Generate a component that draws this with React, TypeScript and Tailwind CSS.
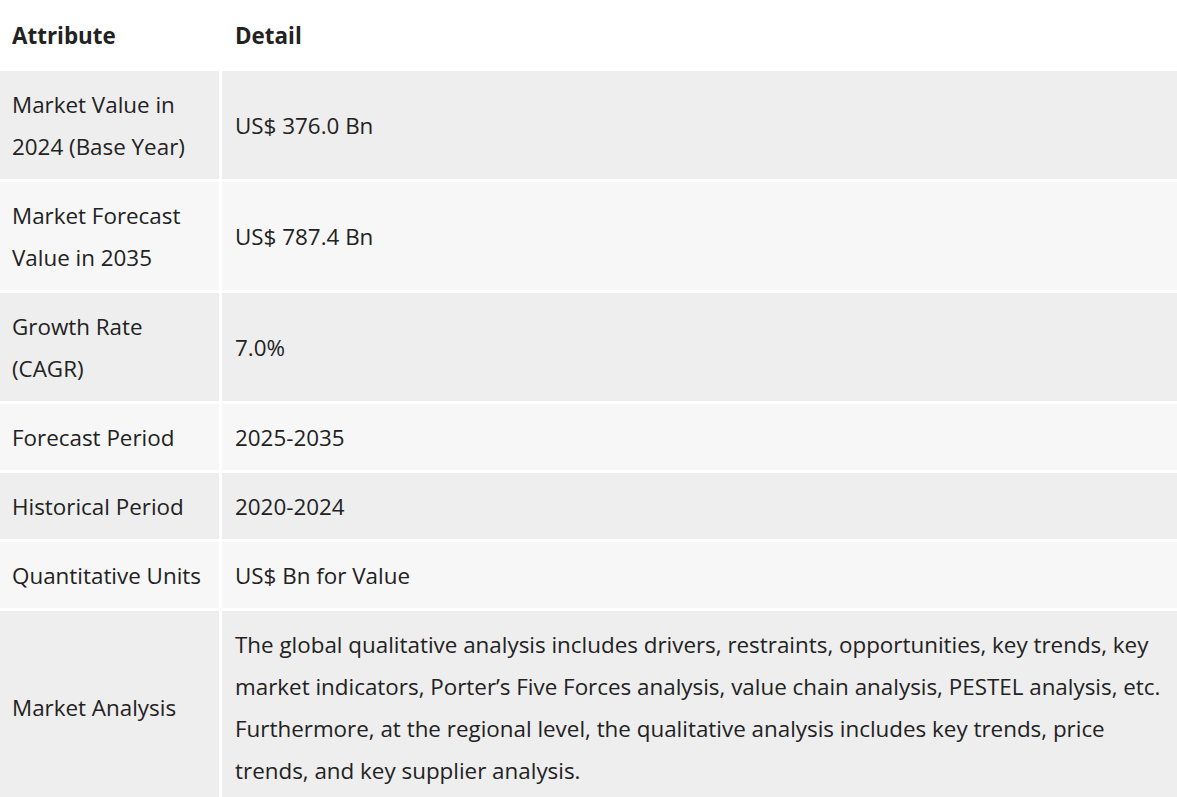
const rows: { attr: React.ReactNode; detail: React.ReactNode }[] = [
  { attr: <>Market Value in<br />2024 (Base Year)</>, detail: "US$ 376.0 Bn" },
  { attr: <>Market Forecast<br />Value in 2035</>, detail: "US$ 787.4 Bn" },
  { attr: <>Growth Rate<br />(CAGR)</>, detail: "7.0%" },
  { attr: "Forecast Period", detail: "2025-2035" },
  { attr: "Historical Period", detail: "2020-2024" },
  { attr: "Quantitative Units", detail: "US$ Bn for Value" },
  {
    attr: "Market Analysis",
    detail: (
      <>
        The global qualitative analysis includes drivers, restraints, opportunities, key trends, key
        <br />
        market indicators, Porter’s Five Forces analysis, value chain analysis, PESTEL analysis, etc.
        <br />
        Furthermore, at the regional level, the qualitative analysis includes key trends, price
        <br />
        trends, and key supplier analysis.
      </>
    ),
  },
];

export default function App() {
  return (
    <div
      className="min-h-screen bg-white text-[#222222] text-[22.4px] leading-[42px]"
      style={{ fontFamily: '"Open Sans", "Noto Sans", sans-serif' }}
    >
      <div className="grid grid-cols-[219px_1fr] gap-[3px]">
        {/* header */}
        <div className="flex h-[68px] items-center px-3 pt-1 font-bold">Attribute</div>
        <div className="flex h-[68px] items-center px-[13px] pt-1 font-bold">Detail</div>

        {rows.map((r, i) => {
          const bg = i % 2 === 0 ? "bg-[#eeeeee]" : "bg-[#f7f7f7]";
          return [
            <div key={`a${i}`} className={`flex items-center px-3 pt-[13px] pb-[11px] ${bg}`}>
              <span className="whitespace-nowrap">{r.attr}</span>
            </div>,
            <div key={`d${i}`} className={`flex items-center px-[13px] pt-[13px] pb-[11px] ${bg}`}>
              <span className="whitespace-nowrap">{r.detail}</span>
            </div>,
          ];
        })}
      </div>
    </div>
  );
}
